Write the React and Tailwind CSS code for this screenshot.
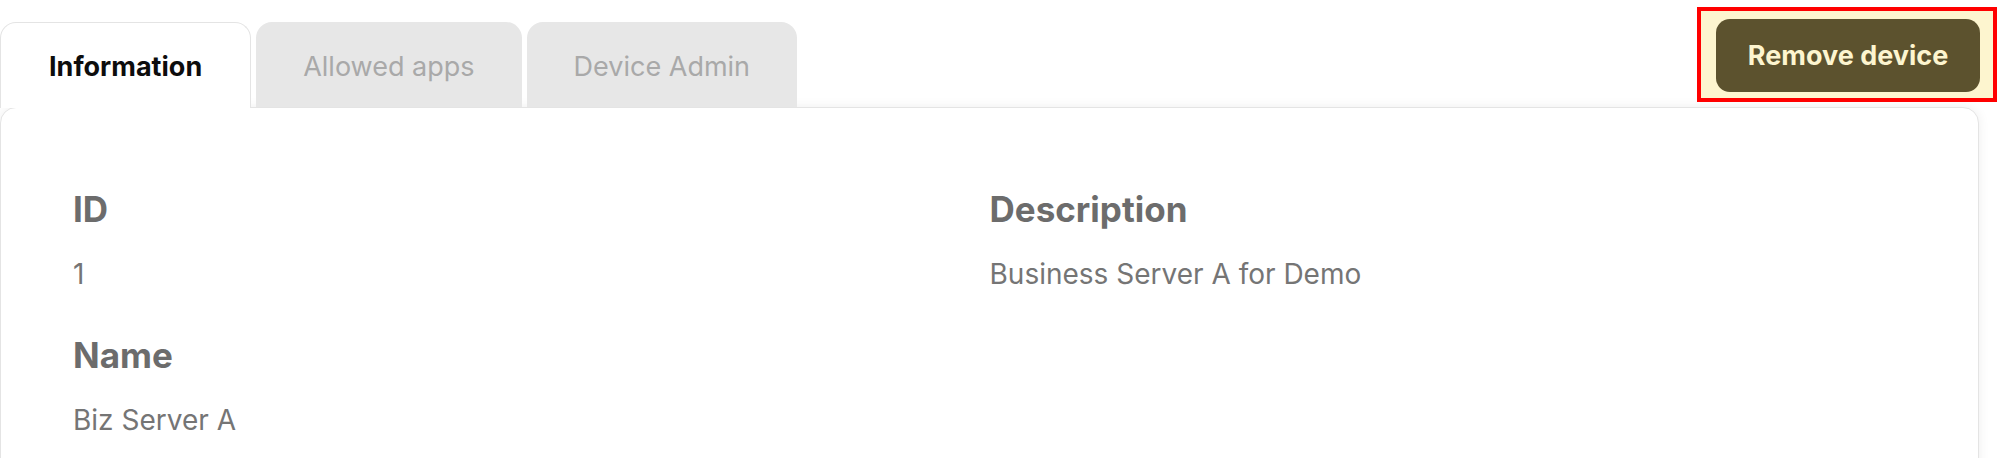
// Device detail panel: tabs, remove button and the info card.
import React from "react";

const TABS = ["Information", "Allowed apps", "Device Admin"];

const FIELDS = [
  { label: "ID", value: "1" },
  { label: "Description", value: "Business Server A for Demo" },
  { label: "Name", value: "Biz Server A" },
];

function Tab({ children, active }) {
  if (active) {
    return (
      <div className="relative z-10 -mb-px h-[86px] rounded-t-[16px] border border-b-0 border-[#e4e4e4] bg-white px-[48px] pt-[30px] text-[27px] leading-[27px] font-bold text-[#0d0d0d]">
        {children}
      </div>
    );
  }
  return (
    <div className="h-[85px] rounded-t-[16px] bg-[#e7e7e7] px-[47px] pt-[31px] text-[27px] leading-[27px] text-[#a9a9a9]">
      {children}
    </div>
  );
}

function Field({ label, value }) {
  return (
    <div>
      <p className="text-[35px] leading-[35px] font-bold text-[#6c6c6c]">{label}</p>
      <p className="mt-[33px] text-[28px] leading-[28px] text-[#757575]">{value}</p>
    </div>
  );
}

export default function App() {
  return (
    <div className="h-[458px] w-[2000px] overflow-hidden bg-white font-['Inter',sans-serif]">
      <div className="flex items-start justify-between">
        <div className="flex items-end gap-[5px] pt-[22px]">
          {TABS.map((t, i) => (
            <Tab key={t} active={i === 0}>
              {t}
            </Tab>
          ))}
        </div>
        <div className="mt-[7px] mr-[3px] border-4 border-[#ff0000] bg-[#fdf5cf] pl-[15px] pr-[13px] pt-[8px] pb-[6px]">
          <button className="h-[73px] w-[264px] rounded-[14px] bg-[#5c522e] text-[27px] leading-[27px] font-bold text-[#fdf5cf]">
            Remove device
          </button>
        </div>
      </div>
      <div className="h-[400px] w-[1979px] rounded-[16px] border border-[#e4e4e4] bg-white px-[72px] pt-[84px] shadow-[0_0_12px_rgba(0,0,0,0.07)]">
        <div className="grid grid-cols-2 gap-y-[50px]">
          {FIELDS.map((f) => (
            <Field key={f.label} label={f.label} value={f.value} />
          ))}
        </div>
      </div>
    </div>
  );
}
